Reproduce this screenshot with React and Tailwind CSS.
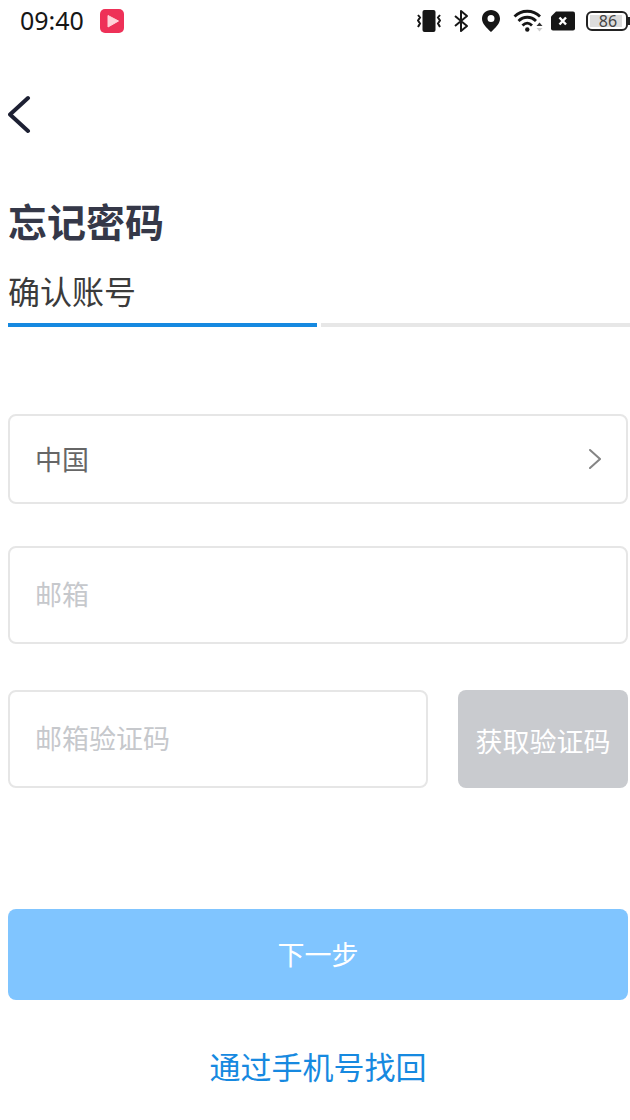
function VibrateIcon() {
    return (
        <svg width="24" height="24" viewBox="0 0 24 24" fill="none" aria-hidden="true">
            <rect x="5.500" y="1" width="13" height="22" rx="2" fill="#161616" />
            <path d="M1 6l2 2.500L1 11.500l2 3L1 18M23 6l-2 2.500 2 3-2 3 2 3.500" stroke="#161616" strokeWidth="2" />
        </svg>
    )
}

function BluetoothIcon() {
    return (
        <svg width="16" height="24" viewBox="0 0 16 24" fill="none" stroke="#161616" strokeWidth="2" aria-hidden="true">
            <path d="M2 7l12 10-6 5V2l6 5L2 17" strokeLinejoin="round" />
        </svg>
    )
}

function LocationIcon() {
    return (
        <svg width="20" height="24" viewBox="0 0 20 24" aria-hidden="true">
            <path fillRule="evenodd" fill="#161616" d="M10 1C4.900 1 1 4.800 1 9.700 1 14.500 5.500 18.500 10 23c4.500-4.500 9-8.500 9-13.300C19 4.800 15.100 1 10 1zm0 5a3.500 3.500 0 1 1 0 7 3.500 3.500 0 0 1 0-7z" />
        </svg>
    )
}

function WifiIcon() {
    return (
        <svg width="30" height="24" viewBox="0 0 30 24" fill="none" aria-hidden="true">
            <g stroke="#161616" strokeWidth="2.800">
                <path d="M1.500 7.500c7-7 18.500-7 25.500 0" />
                <path d="M5.500 12c5-5 12.500-5 17.500 0" />
                <path d="M9.500 16.500c3-3 6.500-3 9.500 0" />
            </g>
            <circle cx="14.300" cy="20.500" r="2.200" fill="#161616" />
            <path d="M23.500 17l3-3.500 3 3.500z" fill="#333" />
            <path d="M23.500 19l3 3.500 3-3.500z" fill="#ccc" />
        </svg>
    )
}

function NoSimIcon() {
    return (
        <svg width="24" height="20" viewBox="0 0 24 20" aria-hidden="true">
            <path d="M5 .5h17a2 2 0 0 1 2 2v15a2 2 0 0 1-2 2H2a2 2 0 0 1-2-2V5.500z" fill="#161616" />
            <path d="M8.500 6.500l6.500 7M15 6.500l-6.500 7" stroke="#fff" strokeWidth="2.400" />
        </svg>
    )
}

function StatusBar() {
    return (
        <div className="flex h-10 items-center justify-between pt-px pl-5">
            <div className="flex items-center gap-4">
                <span className="font-['Noto_Sans',sans-serif] text-[25px] text-[#161616]">09:40</span>
                <svg width="24" height="24" viewBox="0 0 24 24" aria-hidden="true">
                    <rect width="24" height="24" rx="5" fill="#ee3158" />
                    <path d="M8 6.500v11.500L18.500 12z" fill="#ffd3da" stroke="#ffd3da" strokeLinejoin="round" />
                </svg>
            </div>
            <div className="flex items-center">
                <div className="mr-2 flex items-center gap-3">
                    <VibrateIcon />
                    <BluetoothIcon />
                    <LocationIcon />
                    <WifiIcon />
                </div>
                <NoSimIcon />
                <div className="ml-[11px] flex h-5 w-[42px] items-center rounded-md border-2 border-[#222] bg-white p-0.5">
                    <span className="flex h-full w-8 items-center justify-center bg-[#dcdcdc] pl-1 font-['Noto_Sans',sans-serif] text-base text-[#444]">86</span>
                </div>
                <span className="h-2 w-0.5 bg-[#222]" />
            </div>
        </div>
    )
}

function TextField({ label }) {
    return (
        <input
            type="text"
            aria-label={label}
            placeholder={label}
            className="h-[98px] w-full min-w-0 flex-1 rounded-lg border-2 border-[#e6e6e6] px-[25px] pb-1 text-[27px] text-[#555] placeholder:text-[#c6c8cc]"
        />
    )
}

export default function App() {
    return (
        <div className="min-h-screen bg-white font-['Noto_Sans_CJK_SC',sans-serif]">
            <StatusBar />
            <main className="pl-2">
                <button type="button" aria-label="返回" className="mt-[54px] block">
                    <svg width="24" height="40" viewBox="0 0 24 40" fill="none" stroke="#1d2033" strokeWidth="4" strokeLinecap="round" strokeLinejoin="round">
                        <path d="M20 4L2 20.500 20 37" />
                    </svg>
                </button>
                <h1 className="mt-[58px] text-[39px] leading-[56px] font-bold text-[#353848]">忘记密码</h1>
                <h2 className="mt-[18px] text-[32px] leading-[48px] font-normal text-[#3b3b3b]">确认账号</h2>
                <div className="mt-[9px] grid grid-cols-2 gap-1">
                    <div className="h-1 bg-[#1689e0]" />
                    <div className="h-1 bg-[#e7e7e7]" />
                </div>

                <form className="mt-[87px] pr-0.5">
                    <button type="button" className="flex h-[90px] w-full items-center justify-between rounded-lg border-2 border-[#e6e6e6] px-[25px] text-[27px] text-[#666]">
                        中国
                        <svg width="12" height="20" viewBox="0 0 12 20" fill="none" stroke="#858585" strokeWidth="2" strokeLinecap="round" aria-hidden="true">
                            <path d="M1 1l10 9-10 9" />
                        </svg>
                    </button>
                    <div className="mt-[42px] flex">
                        <TextField label="邮箱" />
                    </div>
                    <div className="mt-[46px] flex gap-[30px]">
                        <TextField label="邮箱验证码" />
                        <button type="button" className="h-[98px] w-[170px] rounded-lg bg-[#c9cbcf] pt-1 text-[27px] text-white">获取验证码</button>
                    </div>
                    <button type="submit" className="mt-[121px] h-[91px] w-full rounded-lg bg-[#80c5ff] text-[27px] text-white">下一步</button>
                    <div className="mt-[42px] text-center">
                        <a href="#" className="text-[31px] leading-[48px] text-[#1689e0]">通过手机号找回</a>
                    </div>
                </form>
            </main>
        </div>
    )
}
